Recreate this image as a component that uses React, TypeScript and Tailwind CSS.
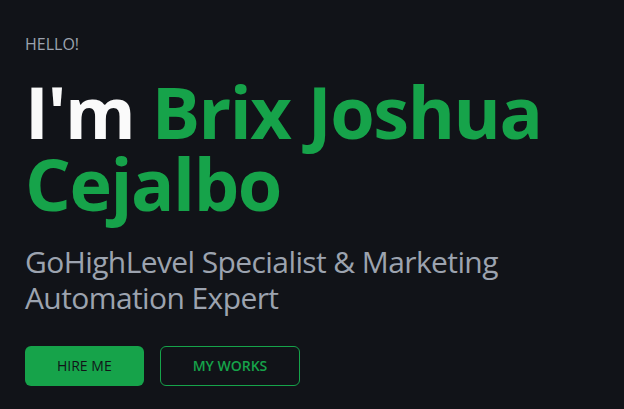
export default function App() {
  return (
    <div
      className="min-h-[409px] w-full bg-[#111318] px-[25px] pt-8"
      style={{ fontFamily: '"Open Sans", "Noto Sans", sans-serif' }}
    >
      <p className="text-base leading-6 text-[#9ca3af]">HELLO!</p>
      <h1 className="mt-[19px] text-[72px] font-bold leading-[72px] tracking-[-0.02em] text-[#fafafa]">
        I'm <span className="text-[#16a34a]">Brix Joshua Cejalbo</span>
      </h1>
      <p className="mt-[25px] max-w-[500px] text-3xl leading-9 tracking-[-0.02em] text-[#9ca3af]">
        GoHighLevel Specialist &amp; Marketing Automation Expert
      </p>
      <div className="mt-[30px] flex gap-4">
        <button className="h-10 rounded-md bg-[#16a34a] px-8 text-sm font-medium text-[#111318]">
          HIRE ME
        </button>
        <button className="h-10 rounded-md border border-[#16a34a] px-8 text-sm font-semibold text-[#16a34a]">
          MY WORKS
        </button>
      </div>
    </div>
  );
}
